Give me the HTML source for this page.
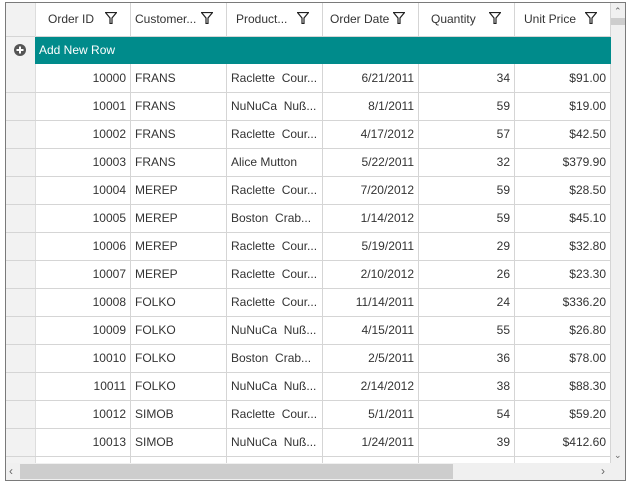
<!DOCTYPE html>
<html><head><meta charset="utf-8"><style>
*{margin:0;padding:0;box-sizing:border-box}
body{width:630px;height:483px;background:#fff;font-family:"Segoe UI","Liberation Sans",sans-serif;font-size:12px;color:#333;position:relative;overflow:hidden}
.a{position:absolute}
.frame{left:5px;top:2px;width:621px;height:479px;border:1px solid #7a7a7a}
.hl{position:absolute;background:#d5d5d5}
.t{position:absolute;white-space:nowrap;line-height:16px}
.f{position:absolute;width:12px;height:12px}
</style></head><body>
<div class="a frame"></div>
<div class="a" style="left:6px;top:3px;width:29px;height:460px;background:#f2f2f2"></div>
<div id="g"></div>
<div class="a" style="left:35px;top:37px;width:576px;height:27px;background:#008b8b"></div>
<div class="t" style="left:39px;top:42px;color:#fff">Add New Row</div>
<svg class="a" style="left:13px;top:43px" width="14" height="14" viewBox="0 0 14 14"><circle cx="7" cy="7" r="6" fill="#555"/><path d="M7 3.5v7M3.5 7h7" stroke="#fff" stroke-width="2"/></svg>
<div class="a" style="left:611px;top:3px;width:14px;height:460px;background:#f0f0f0"></div>
<div class="a" style="left:611px;top:18px;width:14px;height:7px;background:#cdcdcd"></div>
<div class="t" style="left:614px;top:3px;font-size:9px;color:#666">&#8963;</div>
<div class="t" style="left:614px;top:447px;font-size:9px;color:#666">&#8964;</div>
<div class="a" style="left:6px;top:463px;width:619px;height:17px;background:#f0f0f0"></div>
<div class="a" style="left:20px;top:464px;width:433px;height:15px;background:#cdcdcd"></div>
<div class="t" style="left:9px;top:463px;color:#666">&#8249;</div>
<div class="t" style="left:601px;top:463px;color:#666">&#8250;</div>
<script>
var cols=[35,131,227,323,419,515,611];
var hd=["Order ID","Customer...","Product...","Order Date","Quantity","Unit Price"];
var h='';
h+='<div class="hl" style="left:6px;top:36px;width:605px;height:1px"></div>';
for(var i=0;i<6;i++){h+='<div class="hl" style="left:'+(cols[i+1]-1)+'px;top:3px;width:1px;height:460px"></div>';
var w=hd[i];var tx=(i==0?48:i==1?135:i==2?236:i==3?330:i==4?431:524);
h+='<div class="t" style="left:'+tx+'px;top:11px">'+w+'</div>';
h+='<svg class="f" style="left:'+(cols[i+1]-26)+'px;top:12px" viewBox="0 0 12 12"><path d="M0.5 0.5h11L7 6v5.5H5V6z" fill="none" stroke="#222" stroke-width="1.2"/></svg>';}
h+='<div class="hl" style="left:35px;top:3px;width:1px;height:460px;background:#ddd"></div>';
var d=[["10000","FRANS","Raclette  Cour...","6/21/2011","34","$91.00"],["10001","FRANS","NuNuCa  Nuß...","8/1/2011","59","$19.00"],["10002","FRANS","Raclette  Cour...","4/17/2012","57","$42.50"],["10003","FRANS","Alice Mutton","5/22/2011","32","$379.90"],["10004","MEREP","Raclette  Cour...","7/20/2012","59","$28.50"],["10005","MEREP","Boston  Crab...","1/14/2012","59","$45.10"],["10006","MEREP","Raclette  Cour...","5/19/2011","29","$32.80"],["10007","MEREP","Raclette  Cour...","2/10/2012","26","$23.30"],["10008","FOLKO","Raclette  Cour...","11/14/2011","24","$336.20"],["10009","FOLKO","NuNuCa  Nuß...","4/15/2011","55","$26.80"],["10010","FOLKO","Boston  Crab...","2/5/2011","36","$78.00"],["10011","FOLKO","NuNuCa  Nuß...","2/14/2012","38","$88.30"],["10012","SIMOB","Raclette  Cour...","5/1/2011","54","$59.20"],["10013","SIMOB","NuNuCa  Nuß...","1/24/2011","39","$412.60"]];
for(var r=0;r<14;r++){var y=64+28*r;
h+='<div class="hl" style="left:6px;top:'+(y+28)+'px;width:605px;height:1px"></div>';
for(var c=0;c<6;c++){var x0=cols[c],x1=cols[c+1];var right=(c==0||c>=3);
if(right)h+='<div class="t" style="left:'+x0+'px;width:'+(x1-x0-5)+'px;top:'+(y+6)+'px;text-align:right">'+d[r][c]+'</div>';
else h+='<div class="t" style="left:'+(x0+4)+'px;top:'+(y+6)+'px;white-space:pre">'+d[r][c]+'</div>';}}
document.getElementById('g').innerHTML=h;
</script>
</body></html>
